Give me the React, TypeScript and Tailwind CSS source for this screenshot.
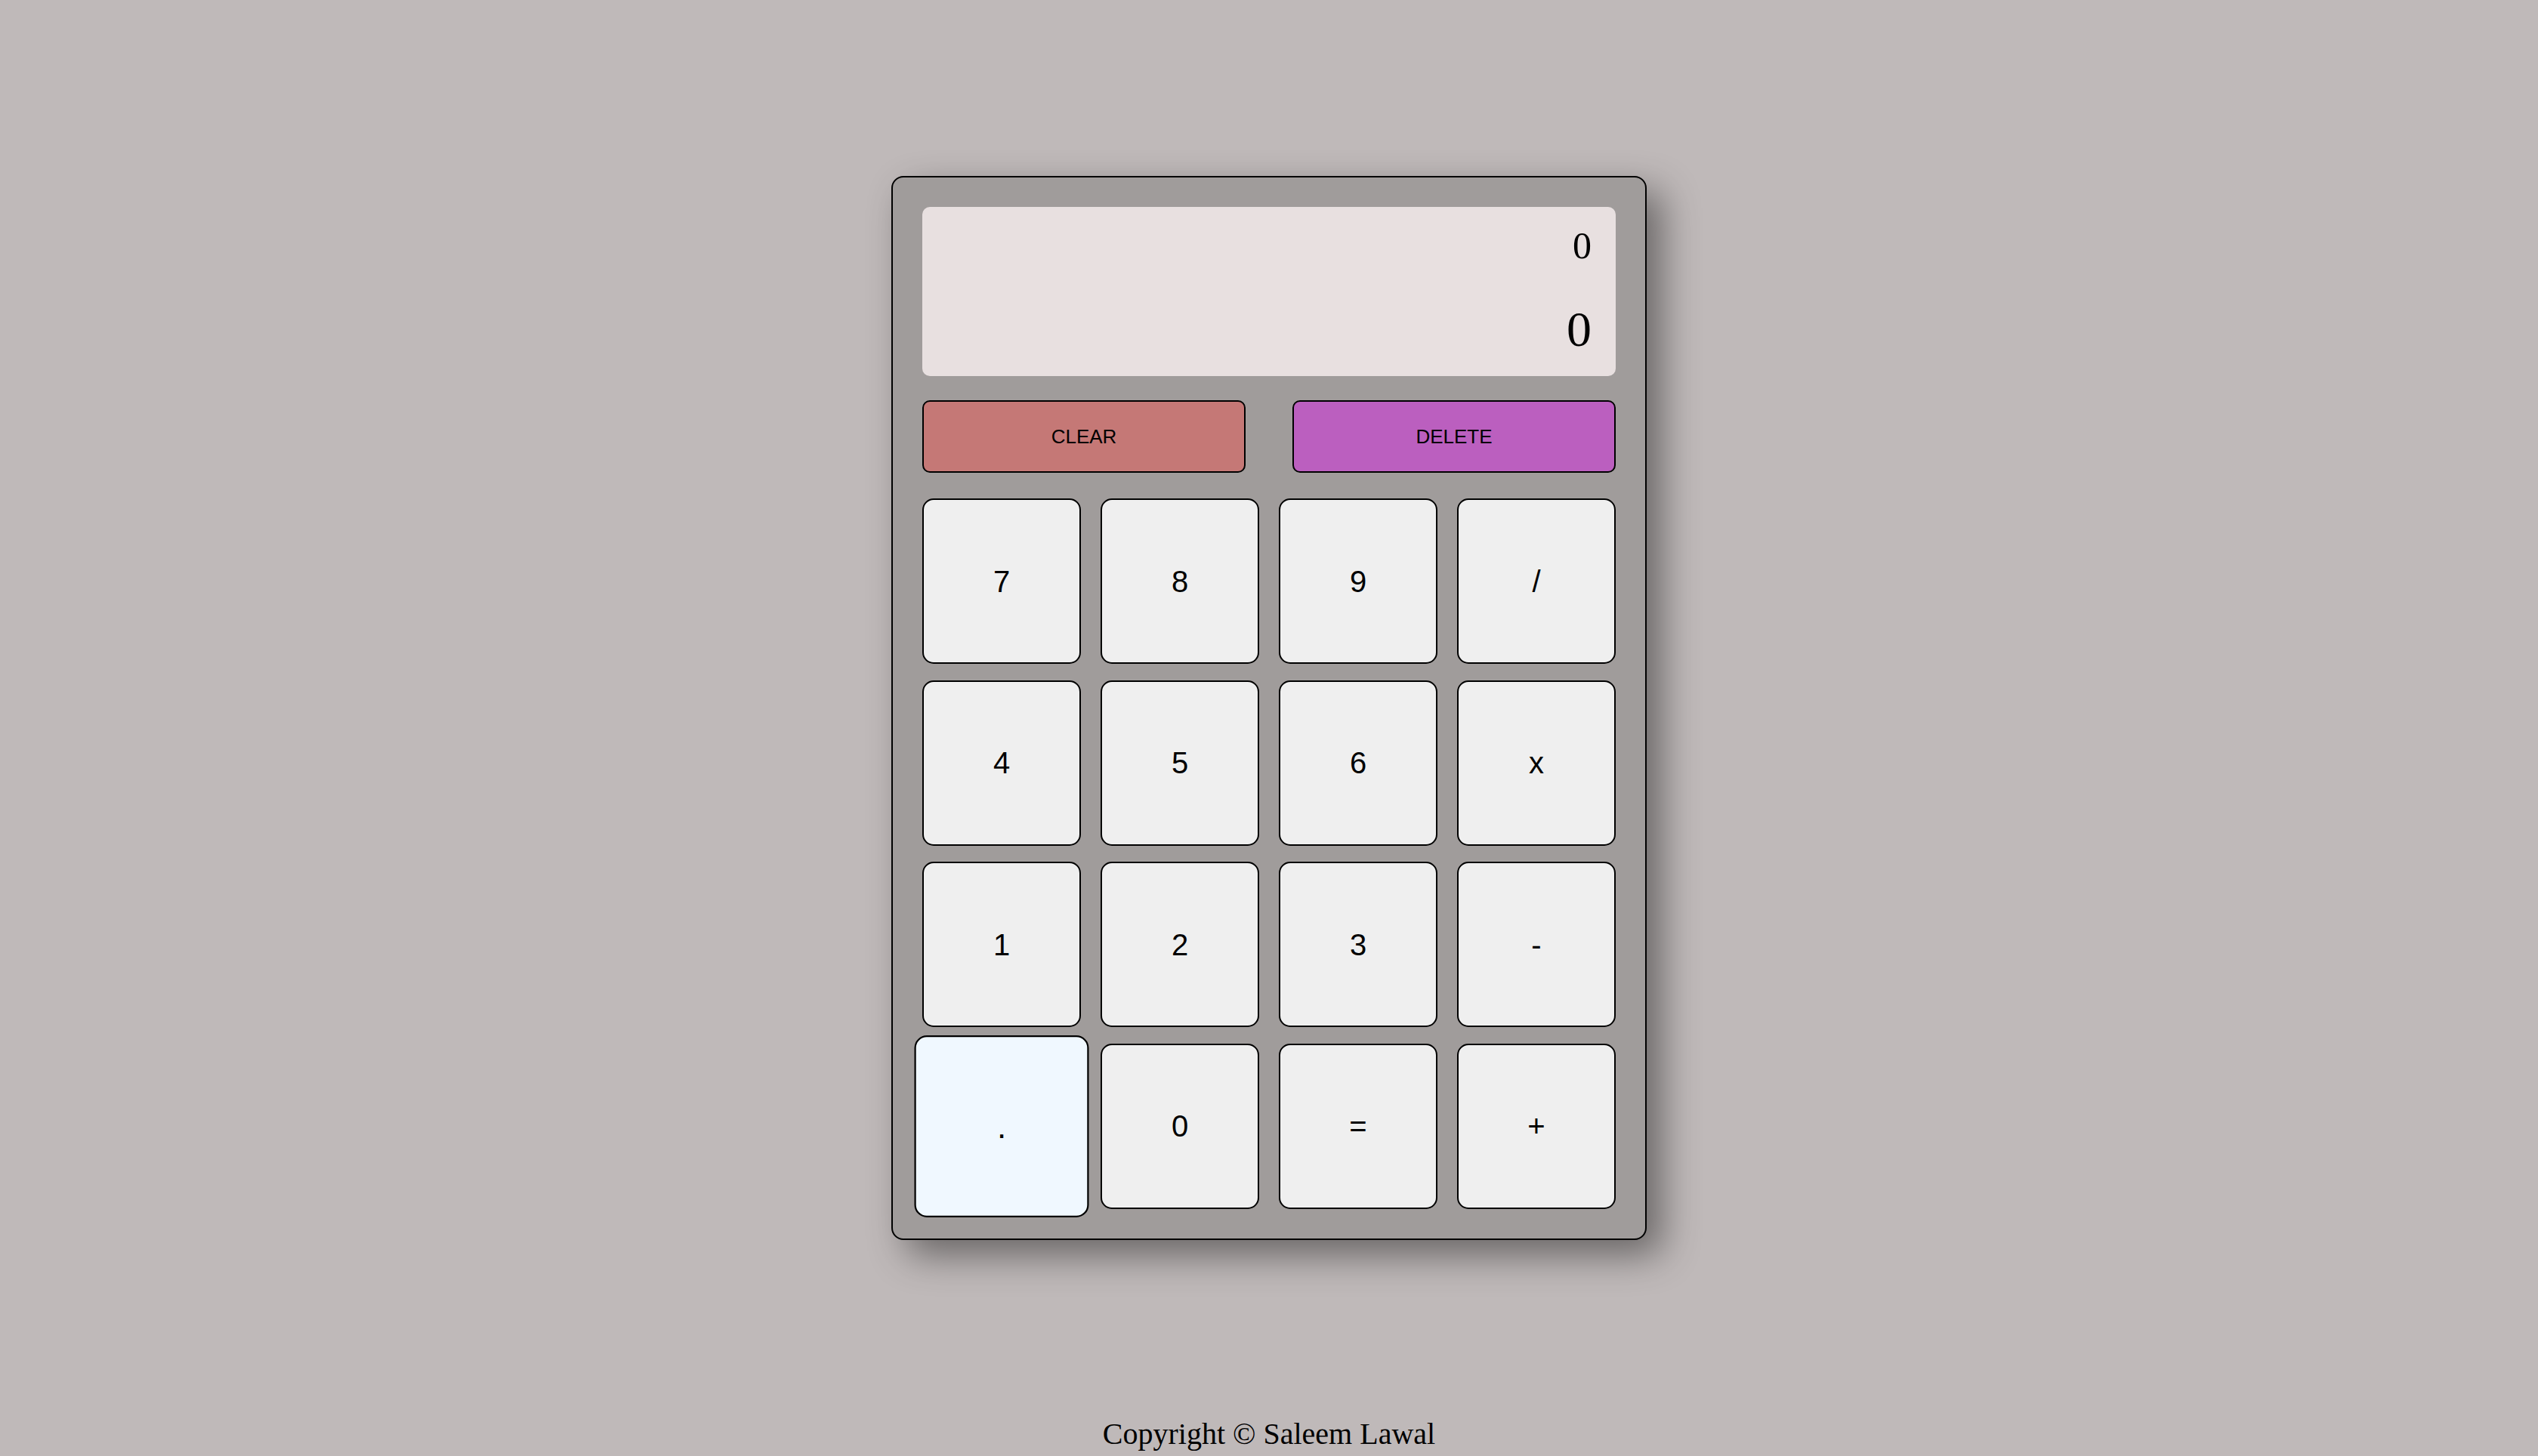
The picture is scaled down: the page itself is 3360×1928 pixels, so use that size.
import React from "react";

const keys = ["7", "8", "9", "/", "4", "5", "6", "x", "1", "2", "3", "-", ".", "0", "=", "+"];

export default function App() {
  return (
    <div className="min-h-[1928px] w-full bg-[#bfb9b9] flex flex-col items-center pt-[233px]">
      <div className="w-[1000px] border-2 border-black rounded-[16px] bg-[#a09c9b] p-[39px] shadow-[20px_20px_50px_rgba(0,0,0,0.45)]">
        <div className="h-[224px] rounded-[10px] bg-[#e8e0e0] pt-[26px] pr-[32px] flex flex-col items-end text-black" style={{ fontFamily: '"Liberation Serif", "Times New Roman", serif' }}>
          <div className="text-[50px] leading-none">0</div>
          <div className="text-[66px] leading-none mt-[53px]">0</div>
        </div>
        <div className="mt-[32px] grid grid-cols-2 gap-x-[62px]" style={{ fontFamily: '"Liberation Sans", Arial, sans-serif' }}>
          <button className="h-[96px] rounded-[10px] border-2 border-black bg-[#c57876] text-[26px] text-black flex items-center justify-center">CLEAR</button>
          <button className="h-[96px] rounded-[10px] border-2 border-black bg-[#bb5fbf] text-[26px] text-black flex items-center justify-center">DELETE</button>
        </div>
        <div className="mt-[34px] grid grid-cols-4 gap-x-[26px] gap-y-[21.5px]" style={{ fontFamily: '"Liberation Sans", Arial, sans-serif' }}>
          {keys.map((k) => (
            <button
              key={k}
              className={
                k === "."
                  ? "h-[219px] rounded-[15px] border-2 border-black bg-[#f0f8ff] text-[40px] text-black flex items-center justify-center scale-110"
                  : "h-[219px] rounded-[15px] border-2 border-black bg-[#efefef] text-[40px] text-black flex items-center justify-center"
              }
            >
              {k}
            </button>
          ))}
        </div>
      </div>
      <div className="mt-[237px] text-[40px] leading-none text-black" style={{ fontFamily: '"Liberation Serif", "Times New Roman", serif' }}>
        Copyright © Saleem Lawal
      </div>
    </div>
  );
}
